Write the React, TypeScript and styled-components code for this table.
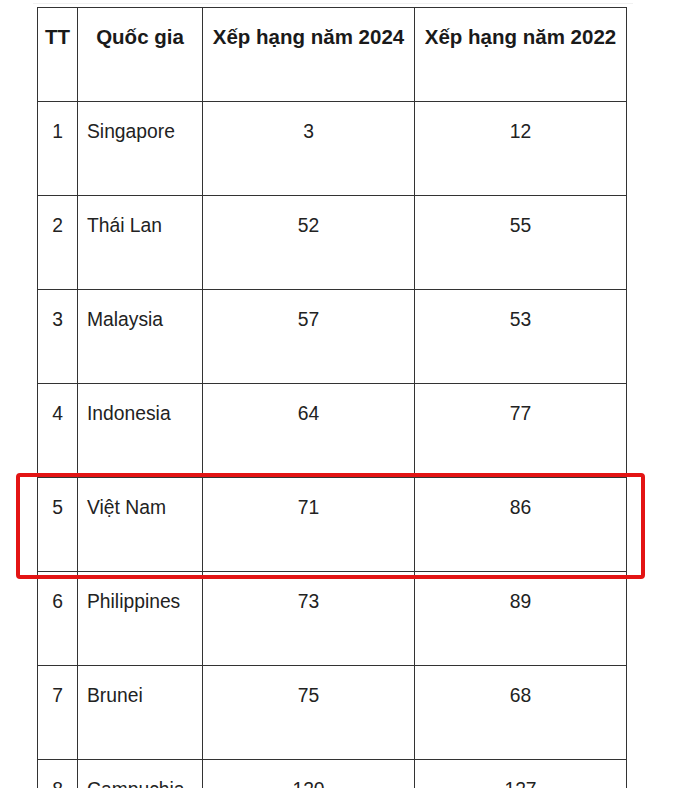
import React from "react";
import styled, { createGlobalStyle } from "styled-components";

const GlobalStyle = createGlobalStyle`
  html, body {
    margin: 0;
    padding: 0;
    background: #ffffff;
  }
  body {
    font-family: "Liberation Sans", Arial, sans-serif;
    color: #222222;
    overflow: hidden;
  }
`;

const rows = [
  { tt: 1, country: "Singapore", y2024: "3", y2022: "12" },
  { tt: 2, country: "Thái Lan", y2024: "52", y2022: "55" },
  { tt: 3, country: "Malaysia", y2024: "57", y2022: "53" },
  { tt: 4, country: "Indonesia", y2024: "64", y2022: "77" },
  { tt: 5, country: "Việt Nam", y2024: "71", y2022: "86" },
  { tt: 6, country: "Philippines", y2024: "73", y2022: "89" },
  { tt: 7, country: "Brunei", y2024: "75", y2022: "68" },
  { tt: 8, country: "Campuchia", y2024: "120", y2022: "127" },
];

const App = () => {
  return (
    <>
      <GlobalStyle />
      <Page>
        <TopRule />
        <TableWrap>
          <Table>
            <colgroup>
              <col style={{ width: 40 }} />
              <col style={{ width: 125 }} />
              <col style={{ width: 212 }} />
              <col style={{ width: 212 }} />
            </colgroup>
            <thead>
              <tr>
                <HeadCell>TT</HeadCell>
                <HeadCell>Quốc gia</HeadCell>
                <HeadCell>Xếp hạng năm 2024</HeadCell>
                <HeadCell>Xếp hạng năm 2022</HeadCell>
              </tr>
            </thead>
            <tbody>
              {rows.map((r) => (
                <tr key={r.tt}>
                  <Cell $align="center">{r.tt}</Cell>
                  <Cell $align="left">{r.country}</Cell>
                  <Cell $align="center">{r.y2024}</Cell>
                  <Cell $align="center">{r.y2022}</Cell>
                </tr>
              ))}
            </tbody>
          </Table>
          <Highlight />
        </TableWrap>
      </Page>
    </>
  );
};

export default App;

const Page = styled.div`
  width: 695px;
  height: 788px;
  overflow: hidden;
  position: relative;
  padding-top: 3px;
  box-sizing: border-box;
`;

const TopRule = styled.div`
  height: 1px;
  margin-left: 33px;
  width: 600px;
  background: #f1f1f1;
`;

const TableWrap = styled.div`
  position: relative;
  margin-top: 3px;
  margin-left: 37px;
`;

const Table = styled.table`
  border-collapse: collapse;
  table-layout: fixed;
  width: 590px;
`;

const HeadCell = styled.th`
  height: 94px;
  box-sizing: border-box;
  border: 1px solid #333333;
  padding: 17px 2px 0;
  vertical-align: top;
  font-size: 20.5px;
  font-weight: 700;
  text-align: center;
  white-space: nowrap;
  color: #1a1a1a;
`;

const Cell = styled.td<{ $align: "left" | "center" }>`
  height: 94px;
  box-sizing: border-box;
  border: 1px solid #333333;
  padding: 19px ${(p) => (p.$align === "left" ? "4px 0 9px" : "2px 0")};
  vertical-align: top;
  font-size: 19.3px;
  text-align: ${(p) => p.$align};
  white-space: nowrap;
  overflow: hidden;
`;

const Highlight = styled.div`
  position: absolute;
  left: -21px;
  top: 466px;
  width: 629px;
  height: 106px;
  box-sizing: border-box;
  border: 4px solid #e31414;
  border-radius: 4px;
  pointer-events: none;
`;
